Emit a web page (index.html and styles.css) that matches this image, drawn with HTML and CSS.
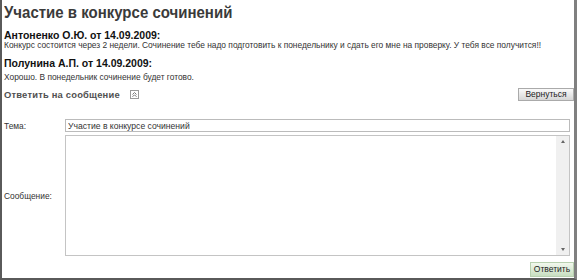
FILE: index.html
```html
<!DOCTYPE html>
<html lang="ru">
<head>
    <meta charset="UTF-8">
    <meta name="viewport" content="width=device-width, initial-scale=1.0">
    <title>Участие в конкурсе сочинений</title>
    <link rel="stylesheet" href="styles.css">
</head>
<body>

<div class="frame">
    <h1 class="title">Участие в конкурсе сочинений</h1>

    <div class="message">
        <h2>Антоненко О.Ю. от 14.09.2009:</h2>
        <p>Конкурс состоится через 2 недели. Сочинение тебе надо подготовить к понедельнику и сдать его мне на проверку. У тебя все получится!!</p>
    </div>

    <div class="message second">
        <h2>Полунина А.П. от 14.09.2009:</h2>
        <p>Хорошо. В понедельник сочинение будет готово.</p>
    </div>

    <div class="replyHead">
        <h3>Ответить на сообщение</h3>
        <span class="collapse">
            <svg width="9" height="9" viewBox="0 0 9 9">
                <rect x="0.5" y="0.5" width="8" height="8" fill="#fff" stroke="#999"/>
                <path d="M2.5 4.5 L4.5 2.5 L6.5 4.5 M2.5 6.8 L4.5 4.8 L6.5 6.8" fill="none" stroke="#777" stroke-width="1"/>
            </svg>
        </span>
        <button class="btn btnBack">Вернуться</button>
    </div>

    <form class="replyForm">
        <div class="row">
            <label for="tema">Тема:</label>
            <input type="text" id="tema" name="tema" value="Участие в конкурсе сочинений">
        </div>
        <div class="row rowText">
            <label for="soobshenie">Сообщение:</label>
            <div class="textBox">
                <textarea id="soobshenie" name="soobshenie"></textarea>
                <div class="scroll">
                    <span class="arrowUp"></span>
                    <span class="arrowDown"></span>
                </div>
            </div>
        </div>
        <div class="actions">
            <button type="submit" class="btn btnReply">Ответить</button>
        </div>
    </form>
</div>

</body>
</html>
```

FILE: styles.css
```css
body {
    font-family: 'Liberation Sans', Arial, sans-serif;
    margin: 0;
    padding: 0;
    background-color: #fff;
    color: #000;
}

.frame {
    width: 572px;
    height: 278px;
    border-left: 2px solid #5a5a5a;
    border-right: 3px solid #808080;
    border-bottom: 2px solid #5a5a5a;
    padding: 0;
    overflow: hidden;
}

.title {
    margin: 0;
    padding: 1px 0 0 2px;
    font-size: 15px;
    font-weight: bold;
    color: #3a3a3a;
    line-height: 22px;
    transform: scaleY(1.12);
    transform-origin: left center;
}

.message {
    padding-left: 2px;
}

.message h2 {
    margin: 7px 0 0;
    font-size: 10.5px;
    font-weight: bold;
    line-height: 11px;
    color: #111;
}

.message p {
    margin: 0;
    font-size: 8.4px;
    line-height: 9px;
    color: #333;
}

.message.second h2 {
    margin-top: 8px;
}

.message.second p {
    margin-top: 4px;
}

.replyHead {
    display: flex;
    align-items: center;
    margin-top: 6px;
    padding-left: 2px;
    height: 13px;
}

.replyHead h3 {
    margin: 0;
    font-size: 9.4px;
    font-weight: bold;
    color: #505050;
    letter-spacing: 0.2px;
}

.collapse {
    display: flex;
    margin-left: 10px;
}

.btn {
    font-family: 'Liberation Sans', Arial, sans-serif;
    font-size: 8.5px;
    color: #222;
    border: 1px solid #aaa;
    border-radius: 0;
    padding: 0 5px;
    height: 13px;
    line-height: 11px;
    cursor: pointer;
}

.btnBack {
    margin-left: auto;
    width: 56px;
    background: linear-gradient(#fafafa, #d6d6d6);
}

.replyForm {
    margin-top: 18px;
}

.row {
    display: flex;
    align-items: center;
    line-height: 10px;
}

.row label {
    width: 61px;
    padding-left: 2px;
    font-size: 8.4px;
    color: #333;
}

.row input {
    width: 505px;
    height: 13px;
    box-sizing: border-box;
    border: 1px solid #bbb;
    padding: 0 2px;
    margin: 0;
    font-family: 'Liberation Sans', Arial, sans-serif;
    font-size: 8.6px;
    color: #333;
    outline: none;
}

.rowText {
    margin-top: 3px;
}

.textBox {
    display: flex;
    width: 505px;
    height: 121px;
    box-sizing: border-box;
    border: 1px solid #c4c4c4;
}

.textBox textarea {
    flex: 1;
    border: none;
    resize: none;
    outline: none;
    padding: 2px;
}

.scroll {
    width: 13px;
    background-color: #f0f0f0;
    display: flex;
    flex-direction: column;
    justify-content: space-between;
    align-items: center;
    padding: 4px 0;
}

.arrowUp,
.arrowDown {
    width: 0;
    height: 0;
    border-left: 2px solid transparent;
    border-right: 2px solid transparent;
}

.arrowUp {
    border-bottom: 3px solid #666;
}

.arrowDown {
    border-top: 3px solid #666;
}

.actions {
    display: flex;
    justify-content: flex-end;
    margin-top: 6px;
}

.btnReply {
    width: 44px;
    height: 15px;
    padding: 0;
    border: 1px solid #b8d0b0;
    background: linear-gradient(#f2f8ee, #c8dfc0);
    color: #222;
    font-size: 8.5px;
}
```
